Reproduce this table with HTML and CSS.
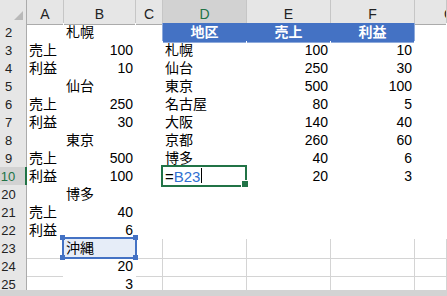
FILE: index.html
```html
<!DOCTYPE html>
<html lang="ja">
<head>
    <meta charset="UTF-8">
    <title>Book1 - Excel</title>
    <link rel="stylesheet" href="styles.css">
</head>
<body>
    <div class="sheet">
        <!-- column letters -->
        <div class="row head">
            <div class="corner"><svg width="9" height="9" viewBox="0 0 9 9"><polygon points="9,0 9,9 0,9" fill="#b9b9b9"/></svg></div>
            <div class="ch">A</div>
            <div class="ch">B</div>
            <div class="ch">C</div>
            <div class="ch on">D</div>
            <div class="ch">E</div>
            <div class="ch">F</div>
            <div class="ch g">G</div>
        </div>

        <div class="row">
            <div class="rh">2</div>
            <div class="c"></div>
            <div class="c">札幌</div>
            <div class="c edge"></div>
            <div class="c th">地区</div>
            <div class="c th">売上</div>
            <div class="c th last">利益</div>
            <div class="c"></div>
        </div>
        <div class="row">
            <div class="rh">3</div>
            <div class="c">売上</div>
            <div class="c num">100</div>
            <div class="c"></div>
            <div class="c">札幌</div>
            <div class="c num">100</div>
            <div class="c num">10</div>
            <div class="c"></div>
        </div>
        <div class="row">
            <div class="rh">4</div>
            <div class="c">利益</div>
            <div class="c num">10</div>
            <div class="c"></div>
            <div class="c">仙台</div>
            <div class="c num">250</div>
            <div class="c num">30</div>
            <div class="c"></div>
        </div>
        <div class="row">
            <div class="rh">5</div>
            <div class="c"></div>
            <div class="c">仙台</div>
            <div class="c"></div>
            <div class="c">東京</div>
            <div class="c num">500</div>
            <div class="c num">100</div>
            <div class="c"></div>
        </div>
        <div class="row">
            <div class="rh">6</div>
            <div class="c">売上</div>
            <div class="c num">250</div>
            <div class="c"></div>
            <div class="c">名古屋</div>
            <div class="c num">80</div>
            <div class="c num">5</div>
            <div class="c"></div>
        </div>
        <div class="row">
            <div class="rh">7</div>
            <div class="c">利益</div>
            <div class="c num">30</div>
            <div class="c"></div>
            <div class="c">大阪</div>
            <div class="c num">140</div>
            <div class="c num">40</div>
            <div class="c"></div>
        </div>
        <div class="row">
            <div class="rh">8</div>
            <div class="c"></div>
            <div class="c">東京</div>
            <div class="c"></div>
            <div class="c">京都</div>
            <div class="c num">260</div>
            <div class="c num">60</div>
            <div class="c"></div>
        </div>
        <div class="row">
            <div class="rh">9</div>
            <div class="c">売上</div>
            <div class="c num">500</div>
            <div class="c"></div>
            <div class="c">博多</div>
            <div class="c num">40</div>
            <div class="c num">6</div>
            <div class="c"></div>
        </div>
        <div class="row">
            <div class="rh on">10</div>
            <div class="c">利益</div>
            <div class="c num">100</div>
            <div class="c"></div>
            <div class="c edit">=<span class="ref">B23</span><span class="caret"></span></div>
            <div class="c num">20</div>
            <div class="c num">3</div>
            <div class="c"></div>
        </div>
        <div class="row">
            <div class="rh">20</div>
            <div class="c"></div>
            <div class="c">博多</div>
            <div class="c"></div>
            <div class="c"></div>
            <div class="c"></div>
            <div class="c"></div>
            <div class="c"></div>
        </div>
        <div class="row">
            <div class="rh">21</div>
            <div class="c">売上</div>
            <div class="c num">40</div>
            <div class="c"></div>
            <div class="c"></div>
            <div class="c"></div>
            <div class="c"></div>
            <div class="c"></div>
        </div>
        <div class="row">
            <div class="rh">22</div>
            <div class="c">利益</div>
            <div class="c num">6</div>
            <div class="c"></div>
            <div class="c"></div>
            <div class="c"></div>
            <div class="c"></div>
            <div class="c"></div>
        </div>

        <!-- rows below the white block keep their gridlines -->
        <div class="row open">
            <div class="rh">23</div>
            <div class="c"></div>
            <div class="c fill pick">沖縄<i class="h tl"></i><i class="h tr"></i><i class="h bl"></i><i class="h br"></i></div>
            <div class="c"></div>
            <div class="c"></div>
            <div class="c"></div>
            <div class="c"></div>
            <div class="c"></div>
        </div>
        <div class="row open">
            <div class="rh">24</div>
            <div class="c"></div>
            <div class="c fill num">20</div>
            <div class="c"></div>
            <div class="c"></div>
            <div class="c"></div>
            <div class="c"></div>
            <div class="c"></div>
        </div>
        <div class="row open">
            <div class="rh">25</div>
            <div class="c"></div>
            <div class="c fill num">3</div>
            <div class="c"></div>
            <div class="c"></div>
            <div class="c"></div>
            <div class="c"></div>
            <div class="c"></div>
        </div>
    </div>
    <div class="hscroll"></div>
</body>
</html>
```

FILE: styles.css
```css
* {
    box-sizing: border-box;
}
body {
    margin: 0;
    width: 447px;
    height: 296px;
    overflow: hidden;
    background: #fff;
    font-family: "Liberation Sans", "Noto Sans CJK JP", sans-serif;
    color: #000;
}
.sheet {
    height: 290px;
    overflow: hidden;
}
.row {
    display: grid;
    grid-template-columns: 27px 37px 72px 27px 84px 84px 84px 1fr;
    height: 18px;
}
.row.head {
    height: 23px;
}

/* headers */
.corner {
    display: flex;
    justify-content: flex-end;
    align-items: flex-end;
    padding: 0 3px 4px 0;
    background: #e6e6e6;
    border-right: 1px solid #ababab;
    border-bottom: 1px solid #ababab;
}
.corner svg {
    display: block;
}
.ch {
    background: #e6e6e6;
    border-right: 1px solid #c6c6c6;
    border-bottom: 1px solid #ababab;
    text-align: center;
    font-size: 14px;
    line-height: 17px;
    padding-top: 6px;
    color: #222;
}
.ch.on {
    background: #d2d2d2;
    color: #217346;
    border-bottom: 2px solid #217346;
}
.ch.g {
    text-align: left;
    padding-left: 29px;
    overflow: hidden;
}
.rh {
    background: #e6e6e6;
    border-right: 1px solid #ababab;
    border-bottom: 1px solid #d0d0d0;
    text-align: center;
    padding-right: 9px;
    font-size: 13px;
    line-height: 19px;
    color: #222;
}
.rh.on {
    background: #d2d2d2;
    color: #217346;
    border-right: 2px solid #217346;
}

/* cells */
.c {
    border-right: 1px solid #fff;
    border-bottom: 1px solid #fff;
    padding: 0 2px;
    font-size: 14px;
    line-height: 19px;
    white-space: nowrap;
}
.num {
    text-align: right;
}
.th {
    background: #4472c4;
    color: #fff;
    font-weight: bold;
    text-align: center;
    border-right-color: #4472c4;
    border-bottom-color: #8eaadb;
}
.th.last,
.edge {
    border-right-color: #8eaadb;
}
.open .c {
    border-color: #d4d4d4;
}
.open .c:nth-child(2) {
    border-right-color: #fff;
}
.open .c.fill {
    border-color: #fff;
}

/* cell being edited */
.edit {
    position: relative;
    font-size: 15px;
}
.edit::before {
    content: "";
    position: absolute;
    top: -2px;
    left: -2px;
    right: -1px;
    bottom: -1px;
    border: 2px solid #217346;
}
.edit::after {
    content: "";
    position: absolute;
    right: -2px;
    bottom: -1px;
    width: 6px;
    height: 6px;
    background: #217346;
    border-left: 1px solid #fff;
    border-top: 1px solid #fff;
}
.ref {
    color: #2f6fd1;
}
.caret {
    display: inline-block;
    width: 1px;
    height: 15px;
    margin-left: 1px;
    background: #000;
    vertical-align: -1px;
}

/* referenced cell */
.pick {
    position: relative;
    background: #e6edf8;
}
.pick::before {
    content: "";
    position: absolute;
    top: -2px;
    left: -2px;
    right: -2px;
    bottom: -1px;
    border: 2px solid #4472c4;
}
.h {
    position: absolute;
    width: 5px;
    height: 5px;
    background: #4472c4;
}
.h.tl { left: -4px; top: -4px; }
.h.tr { right: -3px; top: -4px; }
.h.bl { left: -4px; bottom: -2px; }
.h.br { right: -3px; bottom: -2px; }

.hscroll {
    height: 6px;
    background: #d3d3d3;
}
```
